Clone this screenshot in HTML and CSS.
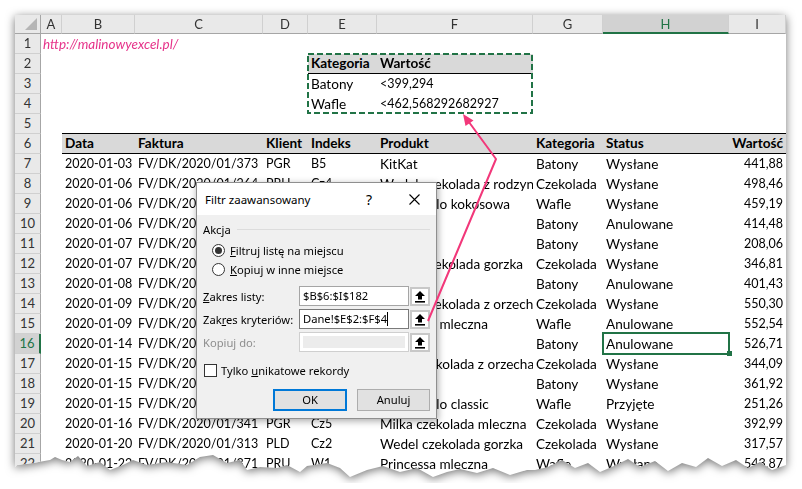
FILE: index.html
```html
<!DOCTYPE html>
<html lang="pl">
<head>
<meta charset="utf-8">
<title>Filtr zaawansowany</title>
<link rel="stylesheet" href="styles.css">
</head>
<body>
<div class="frame">
<div class="sheet">
  <div class="r"><div class="corner"><i></i></div><div class="ch">A</div><div class="ch">B</div><div class="ch">C</div><div class="ch">D</div><div class="ch">E</div><div class="ch">F</div><div class="ch">G</div><div class="ch hsel">H</div><div class="ch">I</div></div>
  <div class="r"><div class="rh">1</div><div class="c link">http://malinowyexcel.pl/</div><div class="c"></div><div class="c"></div><div class="c"></div><div class="c"></div><div class="c"></div><div class="c"></div><div class="c"></div><div class="c"></div></div>
  <div class="r"><div class="rh">2</div><div class="c"></div><div class="c"></div><div class="c"></div><div class="c"></div><div class="c kh anchor">Kategoria<div class="mq"><svg width="226" height="61" viewBox="0 0 226 61"><rect x="1" y="1" width="224" height="59" fill="none" stroke="#217346" stroke-width="2" stroke-dasharray="6 3"/></svg></div></div><div class="c kh">Wartość</div><div class="c"></div><div class="c"></div><div class="c"></div></div>
  <div class="r"><div class="rh">3</div><div class="c"></div><div class="c"></div><div class="c"></div><div class="c"></div><div class="c t">Batony</div><div class="c num">&lt;399,294</div><div class="c"></div><div class="c"></div><div class="c"></div></div>
  <div class="r"><div class="rh">4</div><div class="c"></div><div class="c"></div><div class="c"></div><div class="c"></div><div class="c t">Wafle</div><div class="c num">&lt;462,568292682927</div><div class="c"></div><div class="c"></div><div class="c"></div></div>
  <div class="r"><div class="rh">5</div><div class="c"></div><div class="c tt"></div><div class="c tt"></div><div class="c tt"></div><div class="c tt"></div><div class="c tt"></div><div class="c tt"></div><div class="c tt"></div><div class="c tt"></div></div>
  <div class="r"><div class="rh">6</div><div class="c"></div><div class="c th">Data</div><div class="c th">Faktura</div><div class="c th">Klient</div><div class="c th">Indeks</div><div class="c th">Produkt</div><div class="c th">Kategoria</div><div class="c th">Status</div><div class="c th n">Wartość</div></div>
  <div class="r"><div class="rh">7</div><div class="c"></div><div class="c">2020-01-03</div><div class="c">FV/DK/2020/01/373</div><div class="c">PGR</div><div class="c">B5</div><div class="c">KitKat</div><div class="c">Batony</div><div class="c">Wysłane</div><div class="c n">441,88</div></div>
  <div class="r"><div class="rh">8</div><div class="c"></div><div class="c">2020-01-06</div><div class="c">FV/DK/2020/01/264</div><div class="c">PRU</div><div class="c">Cz4</div><div class="c">Wedel czekolada z rodzynkami</div><div class="c">Czekolada</div><div class="c">Wysłane</div><div class="c n">498,46</div></div>
  <div class="r"><div class="rh">9</div><div class="c"></div><div class="c">2020-01-06</div><div class="c">FV/DK/2020/01/289</div><div class="c">PLD</div><div class="c">W3</div><div class="c">Prince Polo kokosowa</div><div class="c">Wafle</div><div class="c">Wysłane</div><div class="c n">459,19</div></div>
  <div class="r"><div class="rh">10</div><div class="c"></div><div class="c">2020-01-06</div><div class="c">FV/DK/2020/01/301</div><div class="c">PGR</div><div class="c">B2</div><div class="c">Snickers</div><div class="c">Batony</div><div class="c">Anulowane</div><div class="c n">414,48</div></div>
  <div class="r"><div class="rh">11</div><div class="c"></div><div class="c">2020-01-07</div><div class="c">FV/DK/2020/01/287</div><div class="c">PRU</div><div class="c">B1</div><div class="c">Mars</div><div class="c">Batony</div><div class="c">Wysłane</div><div class="c n">208,06</div></div>
  <div class="r"><div class="rh">12</div><div class="c"></div><div class="c">2020-01-07</div><div class="c">FV/DK/2020/01/312</div><div class="c">PLD</div><div class="c">Cz2</div><div class="c">Wedel czekolada gorzka</div><div class="c">Czekolada</div><div class="c">Wysłane</div><div class="c n">346,81</div></div>
  <div class="r"><div class="rh">13</div><div class="c"></div><div class="c">2020-01-08</div><div class="c">FV/DK/2020/01/345</div><div class="c">PGR</div><div class="c">B3</div><div class="c">Twix</div><div class="c">Batony</div><div class="c">Anulowane</div><div class="c n">401,43</div></div>
  <div class="r"><div class="rh">14</div><div class="c"></div><div class="c">2020-01-09</div><div class="c">FV/DK/2020/01/356</div><div class="c">PRU</div><div class="c">Cz3</div><div class="c">Wedel czekolada z orzechami</div><div class="c">Czekolada</div><div class="c">Wysłane</div><div class="c n">550,30</div></div>
  <div class="r"><div class="rh">15</div><div class="c"></div><div class="c">2020-01-09</div><div class="c">FV/DK/2020/01/297</div><div class="c">PLD</div><div class="c">W2</div><div class="c">Princessa mleczna</div><div class="c">Wafle</div><div class="c">Anulowane</div><div class="c n">552,54</div></div>
  <div class="r"><div class="rh rsel">16</div><div class="c"></div><div class="c">2020-01-14</div><div class="c">FV/DK/2020/01/330</div><div class="c">PGR</div><div class="c">B5</div><div class="c">KitKat</div><div class="c">Batony</div><div class="c sel">Anulowane</div><div class="c n">526,71</div></div>
  <div class="r"><div class="rh">17</div><div class="c"></div><div class="c">2020-01-15</div><div class="c">FV/DK/2020/01/318</div><div class="c">PRU</div><div class="c">Cz1</div><div class="c">Milka czekolada z orzechami</div><div class="c">Czekolada</div><div class="c">Wysłane</div><div class="c n">344,09</div></div>
  <div class="r"><div class="rh">18</div><div class="c"></div><div class="c">2020-01-15</div><div class="c">FV/DK/2020/01/322</div><div class="c">PLD</div><div class="c">B4</div><div class="c">Bounty</div><div class="c">Batony</div><div class="c">Wysłane</div><div class="c n">361,92</div></div>
  <div class="r"><div class="rh">19</div><div class="c"></div><div class="c">2020-01-15</div><div class="c">FV/DK/2020/01/279</div><div class="c">PGR</div><div class="c">W2</div><div class="c">Prince Polo classic</div><div class="c">Wafle</div><div class="c">Przyjęte</div><div class="c n">251,26</div></div>
  <div class="r"><div class="rh">20</div><div class="c"></div><div class="c">2020-01-16</div><div class="c">FV/DK/2020/01/341</div><div class="c">PGR</div><div class="c">Cz5</div><div class="c">Milka czekolada mleczna</div><div class="c">Czekolada</div><div class="c">Wysłane</div><div class="c n">392,99</div></div>
  <div class="r"><div class="rh">21</div><div class="c"></div><div class="c">2020-01-20</div><div class="c">FV/DK/2020/01/313</div><div class="c">PLD</div><div class="c">Cz2</div><div class="c">Wedel czekolada gorzka</div><div class="c">Czekolada</div><div class="c">Wysłane</div><div class="c n">317,57</div></div>
  <div class="r"><div class="rh">22</div><div class="c"></div><div class="c">2020-01-22</div><div class="c">FV/DK/2020/01/371</div><div class="c">PRU</div><div class="c">W1</div><div class="c">Princessa mleczna</div><div class="c">Wafle</div><div class="c">Wysłane</div><div class="c n">543,87</div></div>
  <div class="r"><div class="rh">23</div><div class="c"></div><div class="c"></div><div class="c"></div><div class="c"></div><div class="c"></div><div class="c"></div><div class="c"></div><div class="c"></div><div class="c"></div></div>

  <div class="dlg">
    <div class="dlg-title">
      <span class="ttl">Filtr zaawansowany</span>
      <span class="q">?</span>
      <svg class="x" width="11" height="11" viewBox="0 0 11 11"><path d="M0.5 0.5 L10.5 10.5 M10.5 0.5 L0.5 10.5" stroke="#000" stroke-width="1.1" fill="none"/></svg>
    </div>
    <div class="dlg-body">
      <div class="group"><span>Akcja</span><i class="gline"></i></div>
      <div class="radio on"><i class="rb"></i><span><u>F</u>iltruj listę na miejscu</span></div>
      <div class="radio"><i class="rb"></i><span><u>K</u>opiuj w inne miejsce</span></div>
      <div class="field first"><span class="lbl"><u>Z</u>akres listy:</span><div class="inp">$B$6:$I$182</div><div class="pick"><svg width="12" height="13" viewBox="0 0 12 13"><path d="M6 1 L11 6 H8 V9.5 H4 V6 H1 Z" fill="#000"/><rect x="1" y="11" width="10" height="1.6" fill="#000"/></svg></div></div>
      <div class="field"><span class="lbl">Zak<u>r</u>es kryteriów:</span><div class="inp focus">Dane!$E$2:$F$4<i class="caret"></i></div><div class="pick"><svg width="12" height="13" viewBox="0 0 12 13"><path d="M6 1 L11 6 H8 V9.5 H4 V6 H1 Z" fill="#000"/><rect x="1" y="11" width="10" height="1.6" fill="#000"/></svg></div></div>
      <div class="field"><span class="lbl off">Kopiuj do:</span><div class="inp dis"></div><div class="pick"><svg width="12" height="13" viewBox="0 0 12 13"><path d="M6 1 L11 6 H8 V9.5 H4 V6 H1 Z" fill="#000"/><rect x="1" y="11" width="10" height="1.6" fill="#000"/></svg></div></div>
      <div class="check"><i class="cb"></i><span>Tylko <u>u</u>nikatowe rekordy</span></div>
      <div class="btns"><div class="btn ok">OK</div><div class="btn">Anuluj</div></div>
    </div>
  </div>

  <svg class="arrow" width="771" height="468" viewBox="0 0 771 468">
    <polyline points="413,306 481,144 451,103" fill="none" stroke="#f2387a" stroke-width="2" stroke-linejoin="round"/>
    <polygon points="448,99 458.5,105.5 450.5,111" fill="#f2387a"/>
  </svg>
</div>
</div>
</body>
</html>
```

FILE: styles.css
```css
html, body {
  margin: 0;
  padding: 0;
  overflow: hidden;
  background: #ffffff;
}

.frame {
  margin: 15px 0 0 15px;
  width: 771px;
  filter: drop-shadow(0 2px 5px rgba(0, 0, 0, 0.55));
}

.sheet {
  position: relative;
  display: grid;
  grid-template-columns: 26px 21px 73px 128px 45px 69px 156px 70px 126px 57px;
  grid-template-rows: 19px repeat(23, 20px);
  height: 468px;
  overflow: hidden;
  background: #ffffff;
  font-family: Lato, "Liberation Sans", sans-serif;
  font-size: 12.5px;
  color: #000;
  clip-path: polygon(0 0, 771px 0, 771px 450px, 757px 455px, 745px 447px, 733px 453px, 721px 445px, 707px 451px, 693px 443px, 681px 452px, 667px 448px, 653px 456px, 640px 446px, 625px 452px, 613px 444px, 599px 451px, 585px 457px, 573px 448px, 560px 453px, 547px 445px, 533px 452px, 520px 455px, 512px 455px, 495px 460px, 478px 453px, 462px 458px, 445px 454px, 432px 457px, 418px 462px, 402px 453px, 385px 457px, 368px 451px, 352px 455px, 335px 462px, 325px 453px, 312px 448px, 292px 451px, 285px 457px, 272px 450px, 262px 453px, 245px 452px, 232px 455px, 225px 445px, 212px 448px, 198px 440px, 185px 442px, 172px 450px, 152px 447px, 132px 450px, 118px 445px, 108px 450px, 95px 455px, 85px 447px, 72px 451px, 63px 441px, 55px 447px, 47px 445px, 40px 442px, 35px 445px, 18px 448px, 2px 450px, 0 452px);
}

.r {
  display: contents;
}

.c {
  box-sizing: border-box;
  padding: 0 3px;
  line-height: 20px;
  white-space: nowrap;
  overflow: hidden;
}

/* letter-heavy columns F, G, H and headings use a slightly larger size */
.r > .c:nth-child(7),
.r > .c:nth-child(8),
.r > .c:nth-child(9),
.t,
.th,
.kh {
  font-size: 13.6px;
}

.r > .c.num {
  font-size: 12.5px;
}

.n {
  text-align: right;
}

.link {
  overflow: visible;
  color: #e6338a;
  font-style: italic;
  font-size: 13.5px;
  padding-left: 2px;
}

.corner {
  position: relative;
  background: #e9e9e9;
  border-right: 1px solid #a6a6a6;
  border-bottom: 1px solid #a6a6a6;
  box-sizing: border-box;
}

.corner i {
  position: absolute;
  right: 3px;
  bottom: 3px;
  width: 12px;
  height: 12px;
  background: #b5b5b5;
  clip-path: polygon(100% 0, 100% 100%, 0 100%);
}

.ch {
  box-sizing: border-box;
  background: #e9e9e9;
  border-right: 1px solid #d0d0d0;
  border-bottom: 1px solid #a6a6a6;
  text-align: center;
  line-height: 18px;
  font-size: 13px;
  color: #333;
}

.ch.hsel {
  background: #d2d2d2;
  color: #217346;
  border-bottom: 2px solid #217346;
}

.rh {
  box-sizing: border-box;
  background: #e9e9e9;
  border-right: 1px solid #a6a6a6;
  border-bottom: 1px solid #d0d0d0;
  text-align: center;
  line-height: 19px;
  font-size: 13px;
  color: #333;
}

.rh.rsel {
  background: #d2d2d2;
  color: #217346;
  border-right: 2px solid #217346;
}

.kh {
  background: #d9d9d9;
  font-weight: 700;
  border-bottom: 1px solid #000;
  line-height: 19px;
}

.anchor {
  position: relative;
  overflow: visible;
}

.mq {
  position: absolute;
  left: -1px;
  top: -1px;
  width: 226px;
  height: 61px;
  z-index: 2;
}

.mq svg {
  display: block;
}

.tt {
  border-bottom: 1px solid #000;
}

.th {
  background: #d9d9d9;
  font-weight: 700;
  border-bottom: 1px solid #000;
  line-height: 19px;
}

.sel {
  position: relative;
  overflow: visible;
}

.sel::after {
  content: "";
  position: absolute;
  left: -1px;
  top: -2px;
  right: -1px;
  bottom: -1px;
  border: 2px solid #217346;
}

.sel::before {
  content: "";
  position: absolute;
  right: -3px;
  bottom: -2px;
  width: 5px;
  height: 5px;
  background: #217346;
  z-index: 1;
}

/* dialog */
.dlg {
  position: absolute;
  left: 181px;
  top: 167px;
  width: 241px;
  height: 237px;
  box-sizing: border-box;
  border: 1px solid #8f8f8f;
  background: #f0f0f0;
  box-shadow: 1px 2px 7px rgba(0, 0, 0, 0.35);
  font-family: "Noto Sans", "Open Sans", sans-serif;
  font-size: 11.2px;
  color: #000;
  display: flex;
  flex-direction: column;
  z-index: 5;
}

.dlg-title {
  height: 32px;
  flex: none;
  background: #fff;
  display: flex;
  align-items: center;
  padding-left: 8px;
}

.ttl {
  flex: 1;
  font-size: 11.5px;
}

.q {
  font-size: 14px;
  margin-right: 37px;
}

.x {
  display: block;
  margin-right: 16px;
}

.dlg-body {
  flex: 1;
  padding: 0 6px;
  display: flex;
  flex-direction: column;
}

.group {
  margin-top: 6px;
  height: 16px;
  display: flex;
  align-items: center;
}

.gline {
  flex: 1;
  height: 1px;
  background: #dcdcdc;
  margin-left: 6px;
}

.radio {
  height: 19px;
  display: flex;
  align-items: center;
  margin-left: 9px;
}

.group + .radio {
  margin-top: 4px;
}

.rb {
  box-sizing: border-box;
  width: 13px;
  height: 13px;
  border: 1px solid #333;
  border-radius: 50%;
  background: #fff;
  margin-right: 5px;
  position: relative;
}

.radio.on .rb::after {
  content: "";
  position: absolute;
  left: 2px;
  top: 2px;
  width: 7px;
  height: 7px;
  border-radius: 50%;
  background: #333;
}

.field {
  height: 20px;
  display: flex;
  align-items: center;
  margin-top: 3px;
}

.field.first {
  margin-top: 7px;
}

.lbl {
  width: 96px;
  flex: none;
}

.lbl.off {
  color: #8d8d8d;
}

.inp {
  box-sizing: border-box;
  width: 110px;
  height: 20px;
  border: 1px solid #a5a5a5;
  background: #fff;
  padding: 0 3px;
  line-height: 18px;
  margin-right: 1px;
  white-space: nowrap;
  overflow: hidden;
}

.inp.focus {
  border-color: #7a7a7a;
}

.caret {
  display: inline-block;
  width: 1px;
  height: 14px;
  background: #000;
  vertical-align: -3px;
}

.inp.dis {
  border-color: #cfcfcf;
  background: #ececec;
  box-shadow: inset 0 0 0 3px #fff;
}

.pick {
  box-sizing: border-box;
  width: 20px;
  height: 19px;
  border: 2px solid #c8c8c8;
  background: #fff;
  display: flex;
  align-items: center;
  justify-content: center;
}

.pick svg {
  display: block;
}

.check {
  margin-top: 10px;
  height: 16px;
  display: flex;
  align-items: center;
  margin-left: 1px;
}

.cb {
  box-sizing: border-box;
  width: 13px;
  height: 13px;
  border: 1px solid #333;
  background: #fff;
  margin-right: 4px;
}

.btns {
  margin-top: 11px;
  display: flex;
  justify-content: flex-end;
  gap: 10px;
}

.btn {
  box-sizing: border-box;
  width: 73px;
  height: 22px;
  border: 1px solid #adadad;
  background: #e1e1e1;
  text-align: center;
  line-height: 20px;
}

.btn.ok {
  width: 74px;
  border: 2px solid #0078d7;
  line-height: 18px;
}

.arrow {
  position: absolute;
  left: 0;
  top: 0;
  pointer-events: none;
  z-index: 10;
}
```
